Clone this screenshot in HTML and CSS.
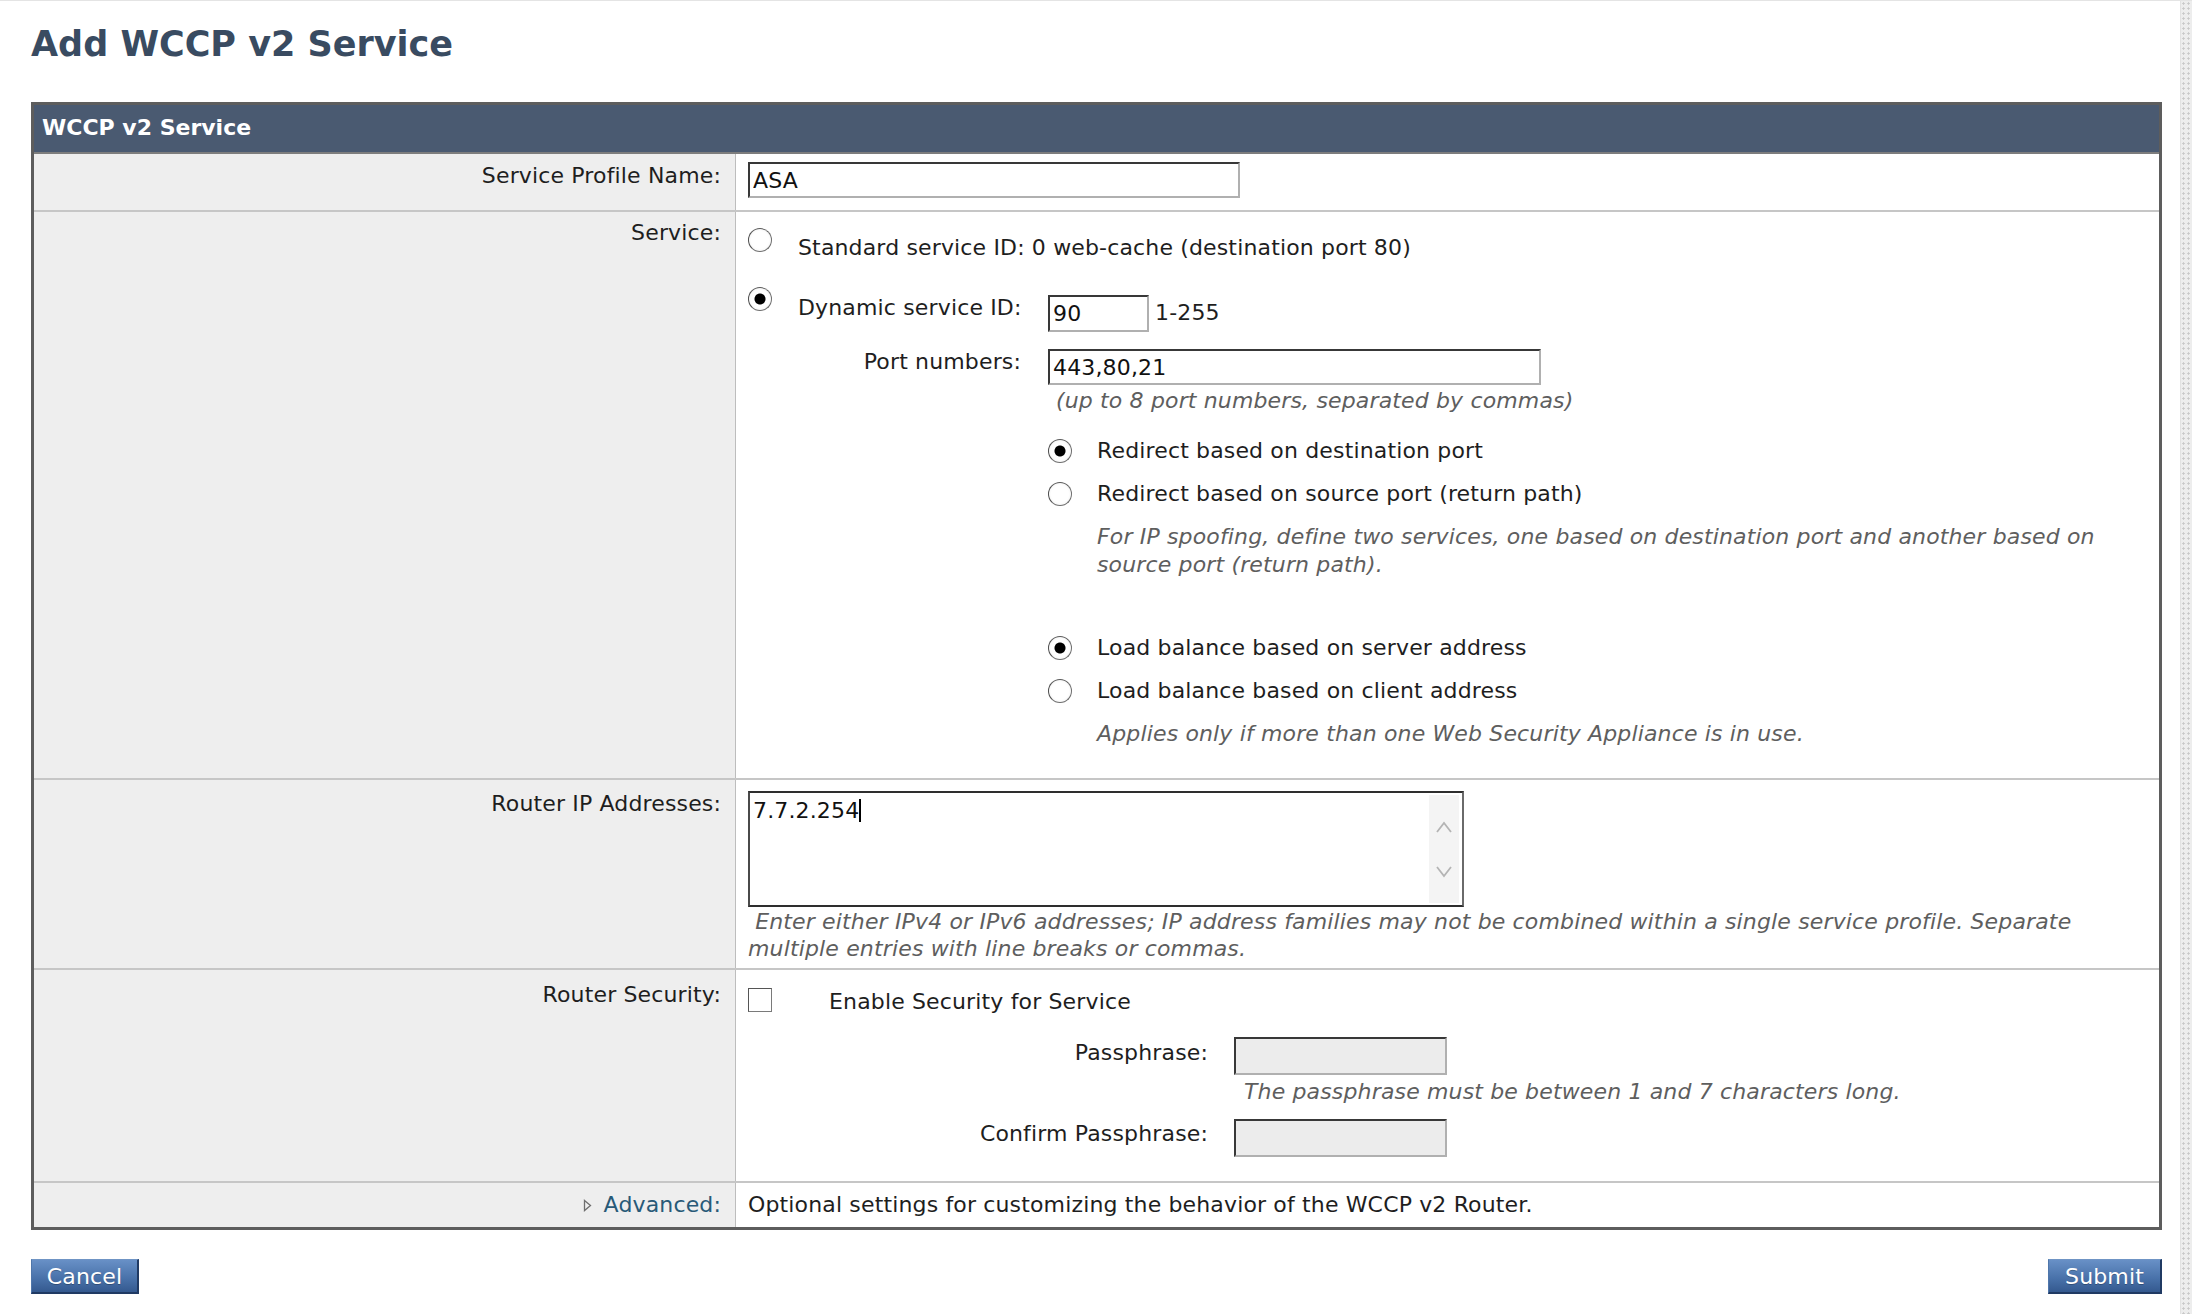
FILE: index.html
```html
<!DOCTYPE html>
<html lang="en">
<head>
<meta charset="utf-8">
<title>Add WCCP v2 Service</title>
<link rel="stylesheet" href="styles.css">
</head>
<body>
<div class="window">
  <main class="page">
    <h1 class="page-title">Add WCCP v2 Service</h1>

    <section class="panel">
      <div class="panel-head">WCCP v2 Service</div>

      <div class="row row-name">
        <div class="lbl">Service Profile Name:</div>
        <div class="val"><input class="txt txt-name" type="text" value="ASA"></div>
      </div>

      <div class="row row-service">
        <div class="lbl">Service:</div>
        <div class="val">
          <div class="svc-std">
            <input class="radio" type="radio" name="svc">
            <span class="svc-std-text">Standard service ID: 0 web-cache (destination port 80)</span>
          </div>
          <div class="svc-grid">
            <input class="radio" type="radio" name="svc" checked>
            <span class="svc-lbl svc-lbl-dyn">Dynamic service ID:</span>
            <div class="svc-field svc-field-id">
              <input class="txt txt-id" type="text" value="90">
              <span class="range">1-255</span>
            </div>

            <span class="svc-empty"></span>
            <span class="svc-lbl svc-lbl-port">Port numbers:</span>
            <div class="svc-field svc-field-ports">
              <input class="txt txt-ports" type="text" value="443,80,21">
              <div class="hint hint-ports">(up to 8 port numbers, separated by commas)</div>

              <label class="opt opt-a"><input class="radio" type="radio" name="redir" checked><span>Redirect based on destination port</span></label>
              <label class="opt opt-b"><input class="radio" type="radio" name="redir"><span>Redirect based on source port (return path)</span></label>
              <div class="hint note">For IP spoofing, define two services, one based on destination port and another based on source port (return path).</div>

              <label class="opt opt-c"><input class="radio" type="radio" name="lb" checked><span>Load balance based on server address</span></label>
              <label class="opt opt-b"><input class="radio" type="radio" name="lb"><span>Load balance based on client address</span></label>
              <div class="hint note note-lb">Applies only if more than one Web Security Appliance is in use.</div>
            </div>
          </div>
        </div>
      </div>

      <div class="row row-router">
        <div class="lbl">Router IP Addresses:</div>
        <div class="val">
          <div class="textarea">
            <div class="textarea-text">7.7.2.254<span class="caret"></span></div>
            <div class="textarea-scroll">
              <svg class="chev" width="20" height="14" viewBox="0 0 20 14"><polyline points="3,12 10,3 17,12" fill="none" stroke="#b4b4b4" stroke-width="1.8"/></svg>
              <svg class="chev" width="20" height="14" viewBox="0 0 20 14"><polyline points="3,2 10,11 17,2" fill="none" stroke="#b4b4b4" stroke-width="1.8"/></svg>
            </div>
          </div>
          <div class="hint help">&nbsp;Enter either IPv4 or IPv6 addresses; IP address families may not be combined within a single service profile. Separate multiple entries with line breaks or commas.</div>
        </div>
      </div>

      <div class="row row-security">
        <div class="lbl">Router Security:</div>
        <div class="val">
          <label class="enable"><input class="check" type="checkbox"><span class="enable-text">Enable Security for Service</span></label>
          <div class="pass-grid">
            <span class="pass-lbl">Passphrase:</span>
            <div class="pass-field">
              <input class="txt txt-pass" type="password" disabled>
              <div class="hint pass-hint">The passphrase must be between 1 and 7 characters long.</div>
            </div>
            <span class="pass-lbl pass-lbl-confirm">Confirm Passphrase:</span>
            <div class="pass-field pass-field-confirm">
              <input class="txt txt-pass" type="password" disabled>
            </div>
          </div>
        </div>
      </div>

      <div class="row row-advanced">
        <div class="lbl lbl-adv">
          <svg class="tri" width="9" height="13" viewBox="0 0 9 13"><polygon points="1.5,1.5 7.5,6.5 1.5,11.5" fill="none" stroke="#6e6e6e" stroke-width="1.3"/></svg>
          <span class="adv-link">Advanced:</span>
        </div>
        <div class="val val-adv">Optional settings for customizing the behavior of the WCCP v2 Router.</div>
      </div>
    </section>

    <div class="actions">
      <button class="btn btn-cancel" type="button">Cancel</button>
      <button class="btn btn-submit" type="button">Submit</button>
    </div>
  </main>
  <div class="scroll-strip"></div>
</div>
</body>
</html>
```

FILE: styles.css
```css
* { box-sizing: border-box; }

html, body {
  margin: 0;
  background: #ffffff;
}

body {
  font-family: "DejaVu Sans", Verdana, sans-serif;
  font-size: 22px;
  line-height: 28px;
  letter-spacing: 0.15px;
  color: #1e1e1e;
}

.window {
  display: flex;
  min-height: 1314px;
  border-top: 1px solid #e4e4e4;
}

.page {
  flex: 1;
  padding: 0 18px 0 31px;
}

.scroll-strip {
  flex: none;
  width: 12px;
  background-color: #ededed;
  background-image: radial-gradient(circle, #c8c8c8 0.9px, transparent 1.4px);
  background-size: 5px 5px;
  border-left: 1px solid #e2e2e2;
}

.page-title {
  margin: 0 0 38px;
  padding-top: 23px;
  font-size: 35px;
  line-height: 40px;
  font-weight: bold;
  letter-spacing: 0;
  color: #394b61;
}

/* panel */
.panel {
  border: 3px solid #5d5d5d;
  background: #ffffff;
}

.panel-head {
  height: 49px;
  padding-left: 8px;
  background: #4a5a71;
  color: #ffffff;
  font-weight: bold;
  letter-spacing: 0;
  line-height: 45px;
  border-bottom: 2px solid #7d7d7d;
}

.row {
  display: grid;
  grid-template-columns: 702px 1fr;
  border-top: 2px solid #c6c6c6;
}

.row-name { border-top: 0; }

.lbl {
  background: #eeeeee;
  border-right: 1px solid #bdbdbd;
  text-align: right;
  padding: 8px 14px 0 0;
}

.val {
  padding: 0 12px;
}

/* inputs */
.txt {
  display: block;
  margin: 0;
  font: inherit;
  letter-spacing: inherit;
  color: #111;
  height: 36px;
  padding: 0 3px;
  border-style: solid;
  border-width: 2px;
  border-color: #383838 #b0b0b0 #b0b0b0 #383838;
  border-radius: 0;
  background: #ffffff;
  outline: none;
}

.radio {
  -webkit-appearance: none;
  appearance: none;
  flex: none;
  display: block;
  margin: 0;
  width: 24px;
  height: 24px;
  border-radius: 50%;
  border: 1.5px solid #6e6e6e;
  border-left-color: #4e4e4e;
  border-top-color: #5a5a5a;
  background: radial-gradient(circle, #ffffff 55%, #e8e8e8 100%);
}

.radio:checked {
  background: radial-gradient(circle, #000 0 5px, #ffffff 6px, #ffffff 55%, #e8e8e8 100%);
}

.check {
  -webkit-appearance: none;
  appearance: none;
  flex: none;
  display: block;
  margin: 0;
  width: 24px;
  height: 24px;
  border: 1.5px solid #555555;
  border-right-color: #7a7a7a;
  border-bottom-color: #7a7a7a;
  background: #ffffff;
}

.hint {
  font-style: italic;
  color: #5e5e5e;
}

/* row 1 */
.row-name .val {
  padding-top: 8px;
  padding-bottom: 12px;
}

.txt-name { width: 492px; }

/* row 2 : service */
.row-service .lbl { padding-top: 7px; }

.row-service .val { padding-bottom: 30px; }

.svc-std {
  display: flex;
  align-items: flex-start;
  margin-top: 16px;
}

.svc-std-text {
  margin: 6px 0 0 26px;
}

.svc-grid {
  display: grid;
  grid-template-columns: 50px 250px 1fr;
  margin-top: 25px;
}

.svc-lbl {
  white-space: nowrap;
  padding-right: 27px;
}

.svc-lbl-dyn {
  margin-top: 7px;
  padding-right: 0;
}

.svc-lbl-port {
  text-align: right;
  margin-top: 16px;
}

.svc-field-id {
  display: flex;
  align-items: flex-start;
}

.txt-id {
  width: 101px;
  height: 37px;
  margin-top: 8px;
}

.range {
  margin: 12px 0 0 6px;
}

.txt-ports {
  width: 493px;
  margin-top: 17px;
}

.hint-ports {
  margin-top: 2px;
  padding-left: 8px;
}

.opt {
  display: flex;
  align-items: center;
  height: 24px;
  line-height: 24px;
}

.opt span { margin-left: 25px; }

.opt-a { margin-top: 24px; }
.opt-b { margin-top: 19px; }
.opt-c { margin-top: 57px; }

.note {
  margin-top: 17px;
  padding-left: 49px;
}

/* row 3 : router ip */
.row-router .lbl { padding-top: 10px; }

.row-router .val {
  padding-top: 11px;
  padding-bottom: 6px;
}

.textarea {
  display: flex;
  width: 716px;
  height: 116px;
  border-style: solid;
  border-width: 2px;
  border-color: #2e2e2e #6a6a6a #2e2e2e #4a4a4a;
  background: #ffffff;
}

.textarea-text {
  flex: 1;
  padding: 4px 0 0 3px;
  color: #111;
}

.caret {
  display: inline-block;
  width: 1.5px;
  height: 23px;
  background: #000;
  vertical-align: -4px;
}

.textarea-scroll {
  flex: none;
  width: 30px;
  margin: 2px 3px 2px 0;
  background: #f4f4f4;
  display: flex;
  flex-direction: column;
  align-items: center;
  padding-top: 25px;
  gap: 31px;
}

.chev { display: block; }

.help {
  margin-top: 1px;
  line-height: 27px;
}

/* row 4 : security */
.row-security .lbl { padding-top: 11px; }

.row-security .val { padding-bottom: 24px; }

.enable {
  display: flex;
  align-items: flex-start;
  margin-top: 18px;
}

.enable-text {
  margin-left: 57px;
}

.pass-grid {
  display: grid;
  grid-template-columns: 486px 1fr;
  margin-top: 21px;
}

.pass-lbl {
  text-align: right;
  padding-right: 26px;
  margin-top: 2px;
}

.pass-lbl-confirm { margin-top: 14px; }

.pass-field-confirm { margin-top: 13px; }

.txt-pass {
  width: 213px;
  height: 38px;
  background: #ececec;
}

.pass-hint {
  margin-top: 3px;
  padding-left: 10px;
}

/* row 5 : advanced */
.lbl-adv {
  display: flex;
  justify-content: flex-end;
  align-items: center;
  padding-top: 0;
  height: 44px;
}

.tri {
  display: block;
  margin-right: 12px;
}

.adv-link {
  color: #285a78;
}

.val-adv {
  padding-top: 8px;
  height: 44px;
}

/* buttons */
.actions {
  display: flex;
  justify-content: space-between;
  margin-top: 29px;
}

.btn {
  font: inherit;
  letter-spacing: inherit;
  color: #ffffff;
  height: 35px;
  line-height: 31px;
  padding: 0 14px;
  border: 1px solid #203a63;
  border-top-color: #6f94c4;
  border-left-color: #4f76aa;
  border-right-width: 2px;
  border-bottom-width: 2px;
  border-radius: 0;
  background: linear-gradient(#6890c6, #4a73ab 55%, #34598f);
  text-shadow: 0 1px 0 rgba(0, 0, 0, 0.25);
}

.btn-cancel { width: 108px; }
.btn-submit { width: 114px; }
```
